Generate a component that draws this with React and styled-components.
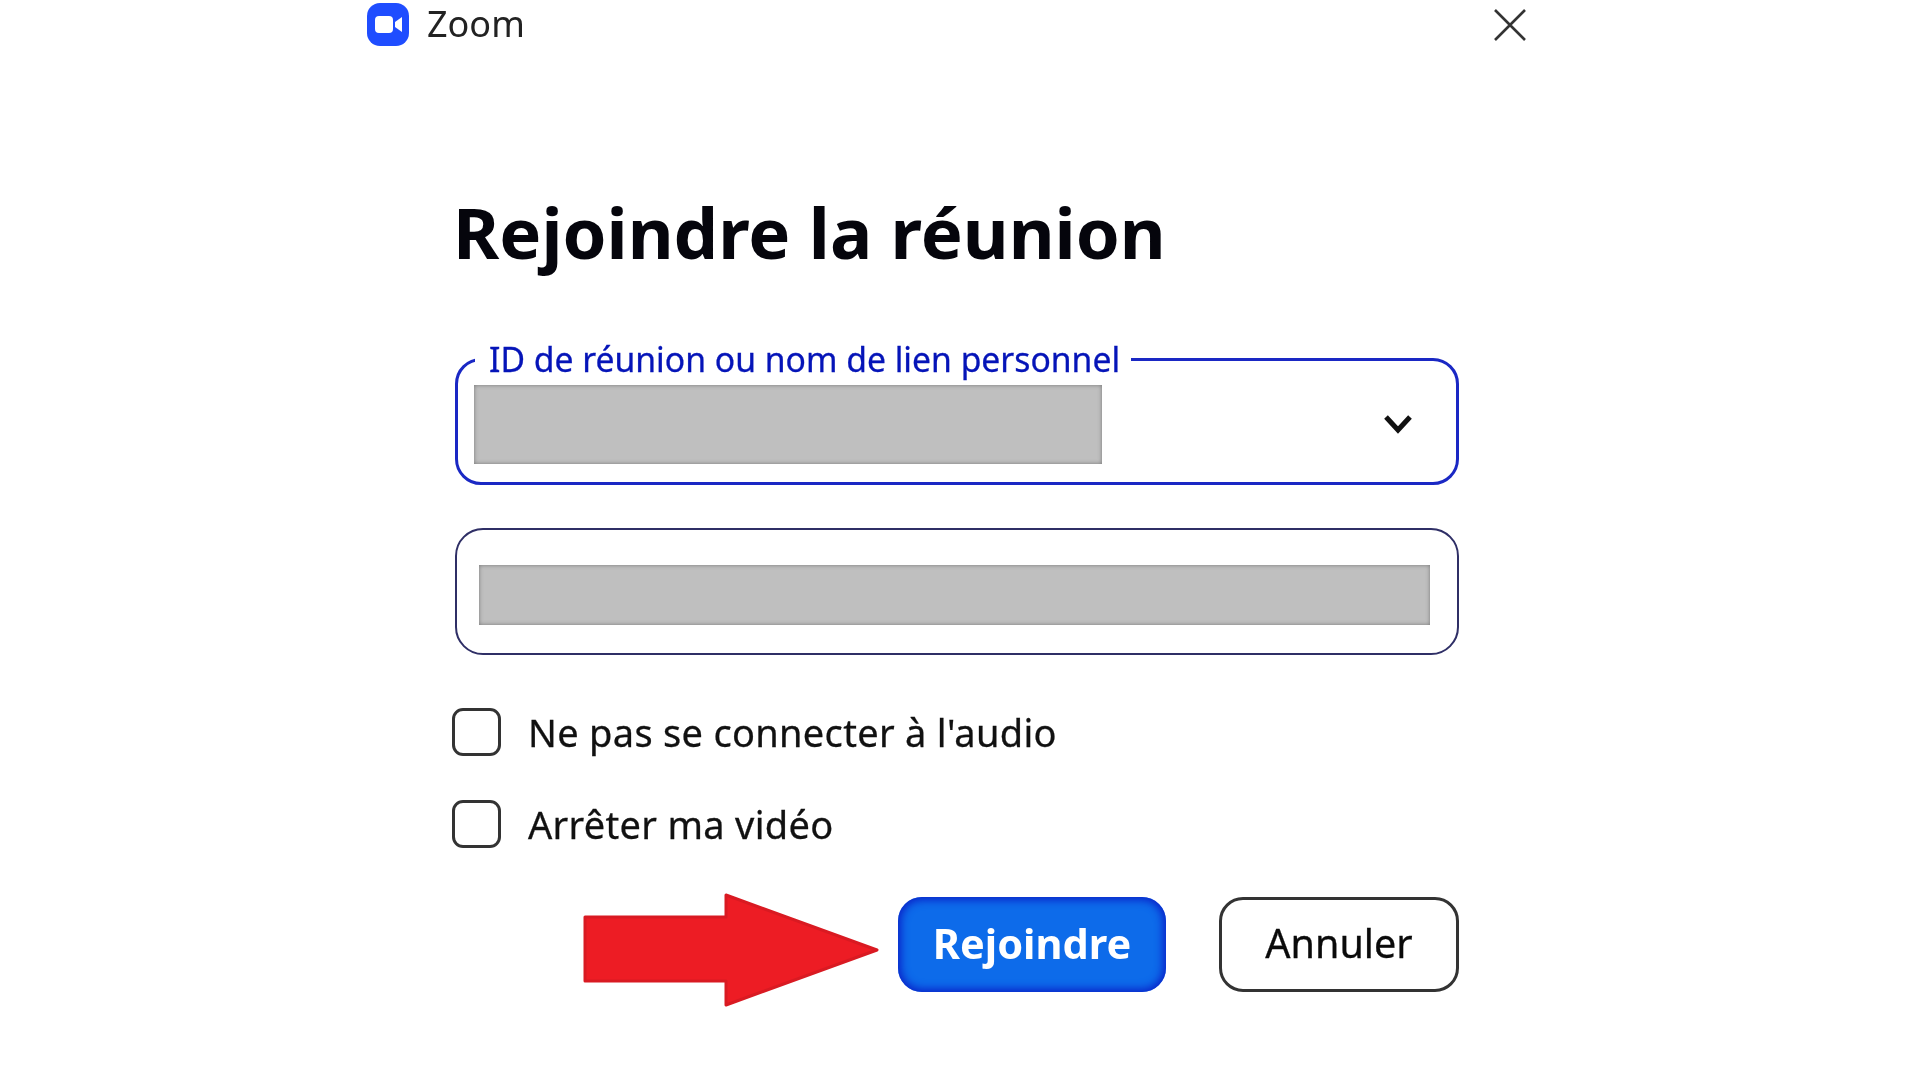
import React from "react";
import styled, { createGlobalStyle } from "styled-components";

const Global = createGlobalStyle`
  html, body { margin: 0; padding: 0; background: #fff; }
  body { font-family: "Noto Sans", "Open Sans", Arial, sans-serif; }
`;

const Page = styled.div`
  width: 1920px;
  height: 1080px;
  overflow: hidden;
  background: #fff;
  padding: 3px 0 0 367px;
  box-sizing: border-box;
  filter: blur(0.5px);
`;

const Window = styled.div`
  width: 1160px;
  display: flex;
  flex-direction: column;
`;

const TitleBar = styled.header`
  display: flex;
  align-items: center;
  justify-content: space-between;
  height: 43px;
`;

const Brand = styled.div`
  display: flex;
  align-items: center;
  gap: 18px;
`;

const AppName = styled.span`
  font-size: 36px;
  line-height: 41px;
  padding-bottom: 2px;
  color: #222;
`;

const CloseButton = styled.button`
  width: 34px;
  height: 34px;
  padding: 0;
  border: 0;
  background: none;
  display: flex;
  align-items: center;
  justify-content: center;
`;

const Content = styled.main`
  width: 1004px;
  margin-left: 88px;
  display: flex;
  flex-direction: column;
`;

const Title = styled.h1`
  margin: 141px 0 0 -2px;
  font-size: 70.6px;
  line-height: 90px;
  font-weight: 700;
  color: #05050c;
`;

const Fields = styled.fieldset`
  margin: 70px 0 0;
  padding: 14px 0 0 16px;
  height: 138px;
  box-sizing: border-box;
  border: 3px solid #1a28c4;
  border-radius: 26px;
  display: flex;
  align-items: flex-start;
  justify-content: space-between;
`;

const FieldLabel = styled.legend`
  margin-left: 1px;
  padding: 0 11px 0 14px;
  font-size: 33.7px;
  line-height: 24px;
  color: #0514b8;
  -webkit-text-stroke: 0.3px #0514b8;
`;

const Masked = styled.div`
  width: ${(p) => p.$w}px;
  height: ${(p) => p.$h}px;
  background: #bfbfbf;
  box-shadow: inset 0 0 4px #777;
  flex: none;
`;

const Chevron = styled.svg`
  width: 32px;
  height: 20px;
  margin: 29px 42px 0 0;
`;

const Password = styled.div`
  margin-top: 43px;
  height: 127px;
  box-sizing: border-box;
  border: 2.5px solid #2f2f66;
  border-radius: 28px;
  padding: 6px 0 0 22px;
  display: flex;
  align-items: center;
`;

const Options = styled.div`
  margin-top: 53px;
  margin-left: -3px;
  display: flex;
  flex-direction: column;
  gap: 44px;
`;

const Option = styled.label`
  display: flex;
  align-items: center;
  gap: 27px;
  height: 48px;
  font-size: 38px;
  letter-spacing: 0.3px;
  color: #111;
  -webkit-text-stroke: 0.3px #111;
`;

const Box = styled.span`
  width: 49px;
  height: 48px;
  box-sizing: border-box;
  border: 3px solid #333;
  border-radius: 11px;
  flex: none;
`;

const Actions = styled.div`
  margin-top: 49px;
  display: flex;
  align-items: flex-start;
  justify-content: flex-end;
`;

const Arrow = styled.svg`
  width: 296px;
  height: 114px;
  margin: -4px 19px 0 0;
  flex: none;
`;

const Button = styled.button`
  height: 95px;
  box-sizing: border-box;
  font-family: inherit;
  padding: 0 0 3px;
  width: ${(p) => p.$w}px;
  border-radius: 24px;
  ${(p) =>
    p.$primary
      ? `font-size:41.5px;background:#0d6bea;color:#fff;font-weight:700;border:0;box-shadow:inset 0 0 9px 3px #0a22c8;`
      : `font-size:39.5px;background:#fff;color:#0a0a0a;border:3px solid #333;margin-left:53px;-webkit-text-stroke:0.3px #0a0a0a;`}
`;

export default function App() {
  return (
    <Page>
      <Global />
      <Window>
        <TitleBar>
          <Brand>
            <svg width="42" height="43" viewBox="0 0 42 43">
              <rect width="42" height="43" rx="13" fill="#1f4dff" />
              <rect x="8" y="13" width="18" height="17" rx="4" fill="#fff" />
              <path d="M28 19l7-5v15l-7-5z" fill="#fff" />
            </svg>
            <AppName>Zoom</AppName>
          </Brand>
          <CloseButton aria-label="Fermer">
            <svg width="32" height="32" viewBox="0 0 32 32">
              <path d="M1 1l30 30M31 1L1 31" stroke="#333" strokeWidth="2.6" />
            </svg>
          </CloseButton>
        </TitleBar>
        <Content>
          <Title>Rejoindre la réunion</Title>
          <Fields>
            <FieldLabel>ID de réunion ou nom de lien personnel</FieldLabel>
            <Masked $w={628} $h={79} />
            <Chevron viewBox="0 0 32 20">
              <path d="M4 3l12 13L28 3" fill="none" stroke="#111" strokeWidth="5" />
            </Chevron>
          </Fields>
          <Password>
            <Masked $w={951} $h={60} />
          </Password>
          <Options>
            <Option>
              <Box />
              Ne pas se connecter à l'audio
            </Option>
            <Option>
              <Box />
              Arrêter ma vidéo
            </Option>
          </Options>
          <Actions>
            <Arrow viewBox="0 0 296 114">
              <path d="M2 24h141V2l151 55-151 55V88H2z" fill="#ed1c24" stroke="#d91a22" strokeWidth="3" strokeLinejoin="round" />
            </Arrow>
            <Button $primary $w={268}>Rejoindre</Button>
            <Button $w={240}>Annuler</Button>
          </Actions>
        </Content>
      </Window>
    </Page>
  );
}
